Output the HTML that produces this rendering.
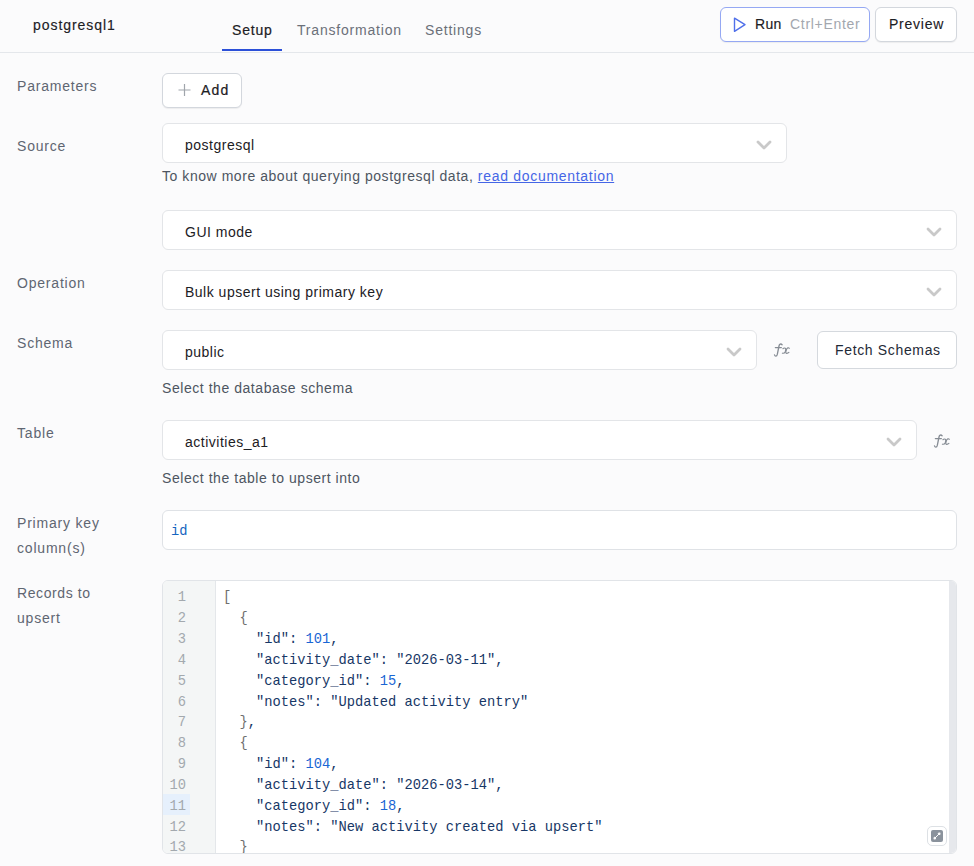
<!DOCTYPE html>
<html><head><meta charset="utf-8">
<style>
*{box-sizing:border-box;margin:0;padding:0}
html,body{width:974px;height:866px;overflow:hidden;background:#fbfbfc;font-family:"Liberation Sans",sans-serif;font-size:14px;color:#1c2024}
.abs{position:absolute;white-space:pre}
.hdr{position:absolute;left:0;top:0;width:974px;height:53px;border-bottom:1px solid #e4e7eb;background:#fbfbfc}
.ttl{left:33px;top:16px;font-size:14px;letter-spacing:0.95px;color:#1c2024;line-height:18px;-webkit-text-stroke:0.15px #1c2024}
.tab{top:21px;line-height:18px;letter-spacing:0.8px;color:#6b7079}
.tab.on{color:#1c2024;-webkit-text-stroke:0.2px #1c2024}
.uline{position:absolute;left:222px;top:49px;width:60px;height:2px;background:#2c50d8}
.btn{position:absolute;background:#fff;border:1px solid #d3d7dd;border-radius:6px;box-shadow:0 1px 1px rgba(0,0,0,0.06)}
.lbl{position:absolute;left:17px;color:#5f6672;letter-spacing:0.8px;line-height:24.5px;margin-top:1px}
.sel{position:absolute;background:#fff;border:1px solid #e3e5e8;border-radius:6px}
.sel .v{position:absolute;left:22px;top:12px;line-height:18px;letter-spacing:0.5px;color:#1c2024;white-space:pre}
.chev{position:absolute;top:15px;width:16px;height:12px}
.help{position:absolute;left:162px;color:#4d5561;letter-spacing:0.55px;line-height:18px;white-space:pre}
.fx{position:absolute}
.gut{position:absolute;left:0;top:0;width:53px;height:100%;background:#f4f6f6;border-right:1px solid #e4e7ea}
.ln{position:absolute;left:0;width:23px;height:20.83px;line-height:20.83px;padding-top:2.3px;text-align:right;font-family:"Liberation Mono",monospace;font-size:13.75px;color:#a3a9ae}
.ln.act{background:#e6f0fc;width:27px;padding-right:4px}
.code{position:absolute;left:60px;top:2.4px;right:8px;height:100%}
.cl{position:absolute;left:0;height:20.83px;line-height:20.83px;white-space:pre;font-family:"Liberation Mono",monospace;font-size:13.75px;color:#173766}
.cl .b{color:#6f6f6f}.cl .n{color:#1a66d4}.cl .p{color:#173766}.cl .s{color:#173766}
.sb{position:absolute;right:0;top:0;width:7px;height:100%;background:#e6e8ec}
.exp{position:absolute;left:764px;top:244.8px;width:20px;height:20px;border:1.2px solid #dde1e5;border-radius:5px;background:#fff;padding:3px}
.exp svg{display:block}

</style></head><body>
<div class="hdr"></div>
<div class="abs ttl">postgresql1</div>
<div class="abs tab on" style="left:232px">Setup</div>
<div class="abs tab" style="left:297px">Transformation</div>
<div class="abs tab" style="left:425px">Settings</div>
<div class="uline"></div>

<div class="btn" style="left:720px;top:7px;width:150px;height:35px;border-color:#95a8f3"></div>
<svg class="abs" style="left:733px;top:17px" width="14" height="16" viewBox="0 0 14 16"><path d="M1.5 1.2 L12 7.7 L1.5 14.3 Z" fill="none" stroke="#5070ea" stroke-width="1.4" stroke-linejoin="round"/></svg>
<div class="abs" style="left:755px;top:15px;line-height:18px;letter-spacing:0.3px;color:#1c2024;-webkit-text-stroke:0.15px #1c2024">Run</div>
<div class="abs" style="left:790px;top:15px;line-height:18px;letter-spacing:0.7px;color:#a3a7ae">Ctrl+Enter</div>
<div class="btn" style="left:875px;top:7px;width:82px;height:35px"></div>
<div class="abs" style="left:889px;top:15px;line-height:18px;letter-spacing:0.75px;color:#1c2024;-webkit-text-stroke:0.1px #1c2024">Preview</div>

<!-- Parameters -->
<div class="lbl" style="top:73px">Parameters</div>
<div class="btn" style="left:162px;top:73px;width:80px;height:35px"></div>
<svg class="abs" style="left:178px;top:84px" width="13" height="13" viewBox="0 0 13 13"><path d="M6.5 0V12M0.5 6H12.5" stroke="#a0a5ab" stroke-width="1.2"/></svg>
<div class="abs" style="left:201px;top:81px;line-height:18px;letter-spacing:1.2px;color:#1c2024;-webkit-text-stroke:0.2px #1c2024">Add</div>

<!-- Source -->
<div class="lbl" style="top:133px">Source</div>
<div class="sel" style="left:162px;top:123px;width:625px;height:40px"><div class="v">postgresql</div>
<svg class="chev" style="left:593px" viewBox="0 0 16 12"><path d="M2 3L8 9L14 3" fill="none" stroke="#c9c9c9" stroke-width="2.8" stroke-linecap="round" stroke-linejoin="round"/></svg></div>
<div class="help" style="top:167px">To know more about querying postgresql data, <span style="color:#4566e6;text-decoration:underline;letter-spacing:0.7px">read documentation</span></div>

<div class="sel" style="left:162px;top:210px;width:795px;height:40px"><div class="v">GUI mode</div>
<svg class="chev" style="left:763px" viewBox="0 0 16 12"><path d="M2 3L8 9L14 3" fill="none" stroke="#c9c9c9" stroke-width="2.8" stroke-linecap="round" stroke-linejoin="round"/></svg></div>

<!-- Operation -->
<div class="lbl" style="top:270px">Operation</div>
<div class="sel" style="left:162px;top:270px;width:795px;height:40px"><div class="v">Bulk upsert using primary key</div>
<svg class="chev" style="left:763px" viewBox="0 0 16 12"><path d="M2 3L8 9L14 3" fill="none" stroke="#c9c9c9" stroke-width="2.8" stroke-linecap="round" stroke-linejoin="round"/></svg></div>

<!-- Schema -->
<div class="lbl" style="top:330px">Schema</div>
<div class="sel" style="left:162px;top:330px;width:595px;height:40px"><div class="v">public</div>
<svg class="chev" style="left:563px" viewBox="0 0 16 12"><path d="M2 3L8 9L14 3" fill="none" stroke="#c9c9c9" stroke-width="2.8" stroke-linecap="round" stroke-linejoin="round"/></svg></div>
<svg class="abs" style="left:770px;top:341px" width="24" height="18" viewBox="0 0 24 18"><g fill="none" stroke="#868c94" stroke-linecap="round"><path d="M12.1 3.7 Q11.3 2.8 10.2 3.1 Q9.3 3.5 9.0 5 L7.3 13.4 Q6.9 15.1 5.8 15.2 Q4.9 15.2 4.5 13.9" stroke-width="1.3"/><path d="M5.3 6.6 H11.4" stroke-width="1.15"/><path d="M12.9 7.7 Q14.2 6.6 15.3 7.3 Q16 7.9 15.6 9.3 L15.1 11 Q14.4 12.6 12.4 12.2" stroke-width="1.15"/><path d="M19.3 7.3 Q18.9 6.7 17.8 6.9 Q16.7 7.3 16.3 9 L15.8 10.8 Q15.6 12.5 16.8 12.4 Q18 12.3 18.9 11.4" stroke-width="1.15"/></g></svg>
<div class="btn" style="left:817px;top:331px;width:140px;height:38px;border-color:#d5d9de;box-shadow:none"></div>
<div class="abs" style="left:835px;top:341px;line-height:18px;letter-spacing:0.65px;color:#1f2a37">Fetch Schemas</div>
<div class="help" style="top:379px">Select the database schema</div>

<!-- Table -->
<div class="lbl" style="top:420px">Table</div>
<div class="sel" style="left:162px;top:420px;width:755px;height:40px"><div class="v">activities_a1</div>
<svg class="chev" style="left:723px" viewBox="0 0 16 12"><path d="M2 3L8 9L14 3" fill="none" stroke="#c9c9c9" stroke-width="2.8" stroke-linecap="round" stroke-linejoin="round"/></svg></div>
<svg class="abs" style="left:930px;top:431.5px" width="24" height="18" viewBox="0 0 24 18"><g fill="none" stroke="#868c94" stroke-linecap="round"><path d="M12.1 3.7 Q11.3 2.8 10.2 3.1 Q9.3 3.5 9.0 5 L7.3 13.4 Q6.9 15.1 5.8 15.2 Q4.9 15.2 4.5 13.9" stroke-width="1.3"/><path d="M5.3 6.6 H11.4" stroke-width="1.15"/><path d="M12.9 7.7 Q14.2 6.6 15.3 7.3 Q16 7.9 15.6 9.3 L15.1 11 Q14.4 12.6 12.4 12.2" stroke-width="1.15"/><path d="M19.3 7.3 Q18.9 6.7 17.8 6.9 Q16.7 7.3 16.3 9 L15.8 10.8 Q15.6 12.5 16.8 12.4 Q18 12.3 18.9 11.4" stroke-width="1.15"/></g></svg>
<div class="help" style="top:469px">Select the table to upsert into</div>

<!-- Primary key -->
<div class="lbl" style="top:510px">Primary key<br>column(s)</div>
<div class="sel" style="left:162px;top:510px;width:795px;height:40px;border-color:#dfe2e6"></div>
<div class="abs" style="left:171px;top:523px;font-family:'Liberation Mono',monospace;font-size:13.75px;line-height:18px;color:#1565c0">id</div>

<!-- Records -->
<div class="lbl" style="top:580px"><span style="letter-spacing:0.6px">Records to</span><br>upsert</div>
<div id="ed" style="position:absolute;left:162px;top:580px;width:795px;height:274px;border:1px solid #e1e4e8;border-radius:6px;background:#fff;overflow:hidden">
<div class="gut"><div class="ln" style="top:5.10px">1</div><div class="ln" style="top:25.93px">2</div><div class="ln" style="top:46.76px">3</div><div class="ln" style="top:67.59px">4</div><div class="ln" style="top:88.42px">5</div><div class="ln" style="top:109.25px">6</div><div class="ln" style="top:130.08px">7</div><div class="ln" style="top:150.91px">8</div><div class="ln" style="top:171.74px">9</div><div class="ln" style="top:192.57px">10</div><div class="ln act" style="top:213.40px">11</div><div class="ln" style="top:234.23px">12</div><div class="ln" style="top:255.06px">13</div></div>
<div class="code"><div class="cl" style="top:5.10px"><span class="b">[</span></div><div class="cl" style="top:25.93px">  <span class="b">{</span></div><div class="cl" style="top:46.76px">    <span class="s">&quot;id&quot;</span><span class="p">:</span> <span class="n">101</span><span class="p">,</span></div><div class="cl" style="top:67.59px">    <span class="s">&quot;activity_date&quot;</span><span class="p">:</span> <span class="s">&quot;2026-03-11&quot;</span><span class="p">,</span></div><div class="cl" style="top:88.42px">    <span class="s">&quot;category_id&quot;</span><span class="p">:</span> <span class="n">15</span><span class="p">,</span></div><div class="cl" style="top:109.25px">    <span class="s">&quot;notes&quot;</span><span class="p">:</span> <span class="s">&quot;Updated activity entry&quot;</span></div><div class="cl" style="top:130.08px">  <span class="b">}</span><span class="p">,</span></div><div class="cl" style="top:150.91px">  <span class="b">{</span></div><div class="cl" style="top:171.74px">    <span class="s">&quot;id&quot;</span><span class="p">:</span> <span class="n">104</span><span class="p">,</span></div><div class="cl" style="top:192.57px">    <span class="s">&quot;activity_date&quot;</span><span class="p">:</span> <span class="s">&quot;2026-03-14&quot;</span><span class="p">,</span></div><div class="cl" style="top:213.40px">    <span class="s">&quot;category_id&quot;</span><span class="p">:</span> <span class="n">18</span><span class="p">,</span></div><div class="cl" style="top:234.23px">    <span class="s">&quot;notes&quot;</span><span class="p">:</span> <span class="s">&quot;New activity created via upsert&quot;</span></div><div class="cl" style="top:255.06px">  <span class="b">}</span></div></div>
<div class="sb"></div>
<div class="exp"><svg width="12" height="12" viewBox="0 0 12 12"><rect x="0" y="0" width="12" height="12" rx="2" fill="#8a929c"/><path d="M3.6 8.4L8.4 3.6" fill="none" stroke="#fff" stroke-width="1"/><path d="M9.1 2.9L7 3.3L8.7 5Z M2.9 9.1L3.3 7L5 8.7Z" fill="#fff" stroke="#fff" stroke-width="0.9" stroke-linejoin="round"/></svg></div>
</div>
</body></html>
